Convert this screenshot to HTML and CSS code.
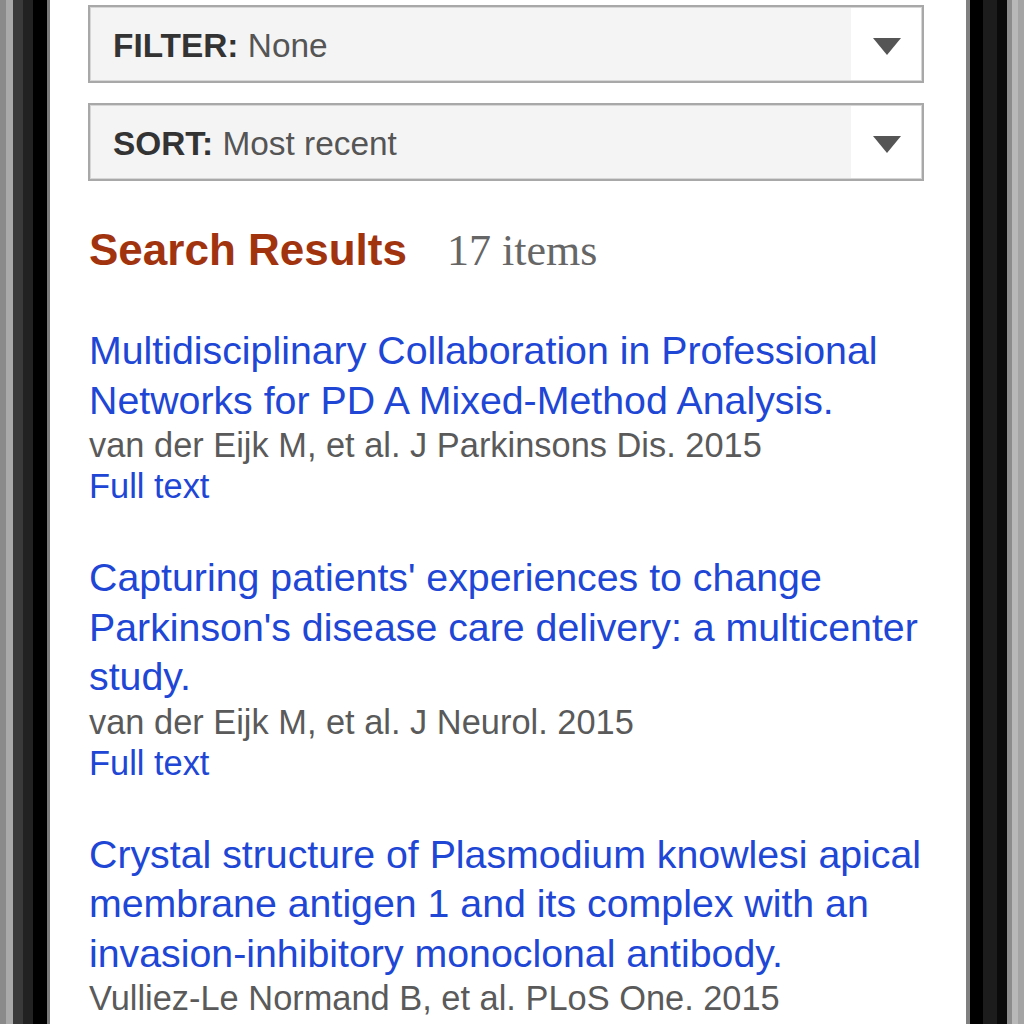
FILE: index.html
```
<!DOCTYPE html>
<html lang="en">
<head>
<meta charset="utf-8">
<title>Search Results</title>
<link rel="stylesheet" href="styles.css">
</head>
<body>
<div class="device">
  <div class="bezel bezel-left"></div>
  <main class="screen">
    <div class="select">
      <div class="select-value"><b>FILTER:</b> None</div>
      <div class="select-arrow"><svg width="28" height="17" viewBox="0 0 28 17"><polygon points="0,0 28,0 14,17" fill="#555"/></svg></div>
    </div>
    <div class="select select-sort">
      <div class="select-value"><b>SORT:</b> Most recent</div>
      <div class="select-arrow"><svg width="28" height="17" viewBox="0 0 28 17"><polygon points="0,0 28,0 14,17" fill="#555"/></svg></div>
    </div>

    <h2 class="results-heading">Search Results<span class="count">17 items</span></h2>

    <ul class="results">
      <li class="result">
        <a class="result-title" href="#">Multidisciplinary Collaboration in Professional Networks for PD A Mixed-Method Analysis.</a>
        <div class="result-meta">van der Eijk M, et al. J Parkinsons Dis. 2015</div>
        <a class="result-link" href="#">Full text</a>
      </li>
      <li class="result">
        <a class="result-title" href="#">Capturing patients' experiences to change Parkinson's disease care delivery: a multicenter study.</a>
        <div class="result-meta">van der Eijk M, et al. J Neurol. 2015</div>
        <a class="result-link" href="#">Full text</a>
      </li>
      <li class="result">
        <a class="result-title" href="#">Crystal structure of Plasmodium knowlesi apical membrane antigen 1 and its complex with an invasion-inhibitory monoclonal antibody.</a>
        <div class="result-meta">Vulliez-Le Normand B, et al. PLoS One. 2015</div>
      </li>
    </ul>
  </main>
  <div class="bezel bezel-right"></div>
</div>
</body>
</html>
```

FILE: styles.css
```
html, body {
  margin: 0;
  padding: 0;
  height: 1024px;
  overflow: hidden;
  background: #fff;
}

.device {
  display: flex;
  height: 1024px;
  font-family: "Liberation Sans", Arial, sans-serif;
}

.bezel-left {
  width: 50px;
  flex: none;
  background: linear-gradient(to right,
    #8a8a8a 0, #8a8a8a 6px,
    #a9a9a9 6px, #a9a9a9 13px,
    #3a3a3a 13px, #3a3a3a 23px,
    #222 23px, #222 33px,
    #000 33px, #000 47px,
    #7a7a7a 47px, #7a7a7a 50px);
}

.bezel-right {
  width: 58px;
  flex: none;
  background: linear-gradient(to right,
    #808080 0, #808080 4px,
    #000 4px, #000 17px,
    #1c1c1c 17px, #1c1c1c 31px,
    #0a0a0a 31px, #0a0a0a 41px,
    #8c8c8c 41px, #8c8c8c 46px,
    #b8b8b8 46px, #b8b8b8 52px,
    #a4a4a4 52px, #a4a4a4 58px);
}

.screen {
  flex: 1;
  background: #fff;
  padding: 5px 38px 0 39px;
  min-width: 0;
}

.select {
  display: flex;
  height: 78px;
  box-sizing: border-box;
  margin: 0 4px 0 -1px;
  border: 2px solid #a8a8a8;
  box-shadow: inset 0 0 0 1px #d6d6d6;
  background: #fff;
}

.select-sort {
  margin-top: 20px;
}

.select-value {
  flex: 1;
  background: #f4f4f4;
  margin: 1px 0 1px 1px;
  padding: 4px 0 0 22px;
  font-size: 33.4px;
  line-height: 68px;
  color: #555;
  white-space: nowrap;
}

.select-value b {
  color: #333;
  font-weight: bold;
}

.select-arrow {
  width: 71px;
  flex: none;
  display: flex;
  align-items: center;
  justify-content: center;
  padding-top: 4px;
  box-sizing: border-box;
}

.select-arrow svg {
  display: block;
}

.results-heading {
  margin: 44px 0 0;
  font-size: 44px;
  line-height: 50px;
  font-weight: bold;
  color: #a1340f;
  white-space: nowrap;
}

.count {
  margin-left: 40px;
  font-family: "Liberation Serif", "Times New Roman", serif;
  font-weight: normal;
  font-size: 44px;
  color: #666;
}

.results {
  list-style: none;
  margin: 50px 0 0;
  padding: 0;
}

.result + .result {
  margin-top: 46px;
}

.result-title {
  display: block;
  font-size: 39.3px;
  line-height: 49.5px;
  color: #2046d6;
  text-decoration: none;
}

.result-meta {
  font-size: 34.4px;
  line-height: 41px;
  color: #5a5a5a;
}

.result-link {
  display: block;
  font-size: 34.4px;
  line-height: 41px;
  color: #2046d6;
  text-decoration: none;
}
```
